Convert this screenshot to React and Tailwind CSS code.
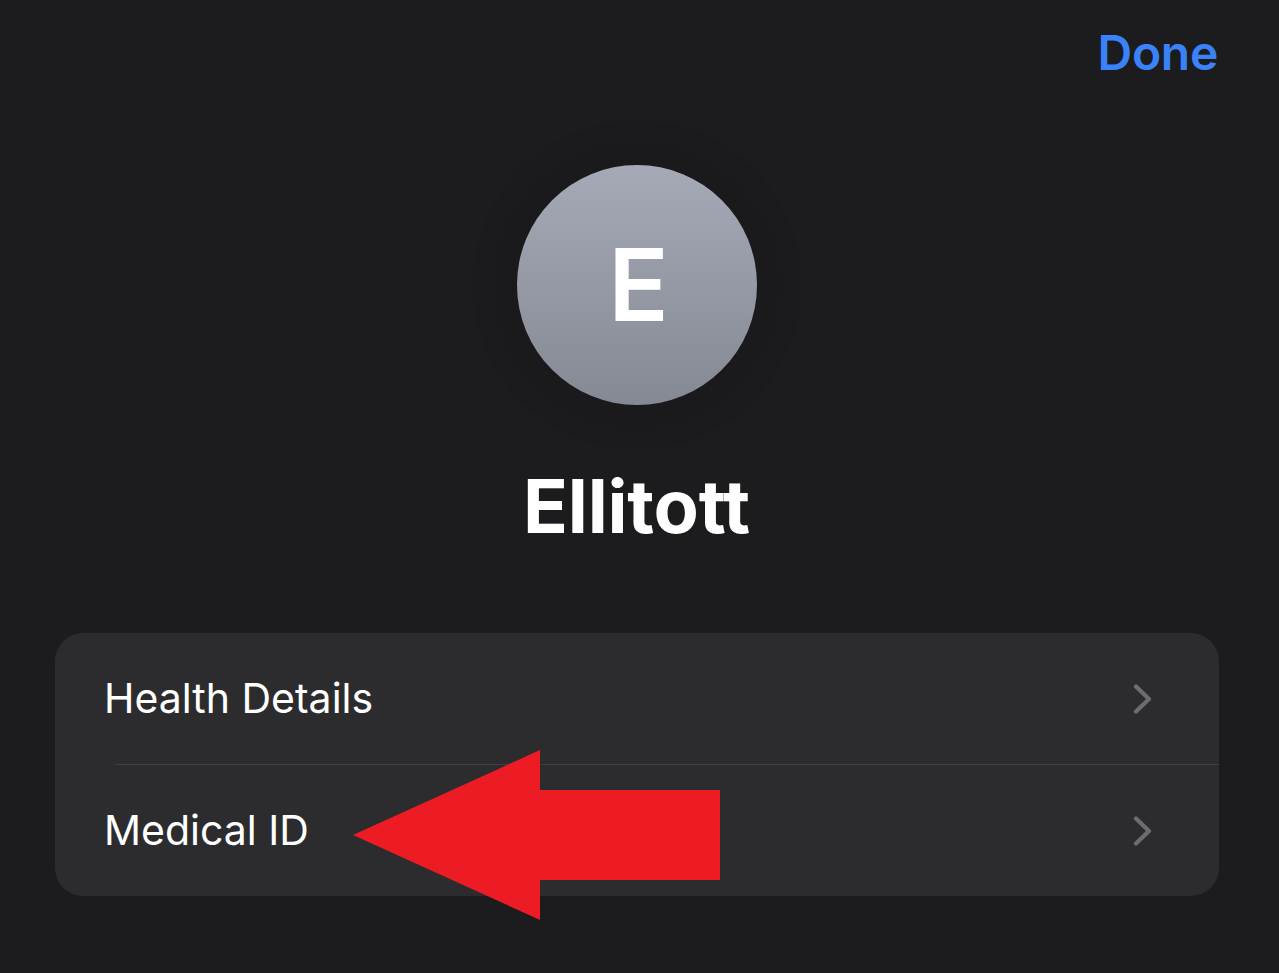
import React from 'react';

const font = { fontFamily: 'Inter, "Noto Sans", sans-serif' };

function Chevron() {
  return (
    <svg width="20" height="30" viewBox="0 0 20 30" fill="none" className="shrink-0">
      <path d="M3 2.5 L16 15 L3 27.5" stroke="#6c6c71" strokeWidth="4.2" strokeLinecap="round" strokeLinejoin="round" />
    </svg>
  );
}

function Row({ label, divider }) {
  return (
    <div className="relative">
      <div className="flex h-[131px] items-center justify-between pl-[49px] pr-[66px]">
        <span className="text-[41px] text-white">{label}</span>
        <Chevron />
      </div>
      {divider && <div className="ml-[60px] h-px bg-[#3e3e41]" />}
    </div>
  );
}

export default function App() {
  return (
    <div className="relative h-[973px] w-full overflow-hidden bg-[#1c1c1e]" style={font}>
      {/* Nav bar */}
      <div className="flex h-[108px] items-center justify-end pb-[2px] pr-[61px]">
        <button className="text-[48px] font-semibold tracking-[-0.3px] text-[#3a82f7]">Done</button>
      </div>

      {/* Avatar */}
      <div className="mt-[12px] flex justify-center pr-[6px]">
        <div className="flex h-[330px] w-[330px] items-center justify-center rounded-full bg-[radial-gradient(circle,#1a1a1c_55%,#1b1b1d_85%,#1c1c1e_100%)]">
          <div className="flex h-[240px] w-[240px] items-center justify-center rounded-full bg-gradient-to-b from-[#a6aab6] to-[#858994]">
            <span className="pl-[4px] text-[100px] font-semibold leading-none text-white">E</span>
          </div>
        </div>
      </div>

      {/* Name */}
      <div className="mt-[19px] flex justify-center pr-[6px]">
        <h1 className="text-[74px] font-bold leading-none tracking-[-0.2px] text-white">Ellitott</h1>
      </div>

      {/* List */}
      <div className="ml-[55px] mt-[90px] w-[1164px] overflow-hidden rounded-[28px] bg-[#2c2c2e]">
        <Row label="Health Details" divider />
        <Row label="Medical ID" />
      </div>

      {/* Annotation arrow */}
      <svg className="absolute left-0 top-0" width="1279" height="973" viewBox="0 0 1279 973">
        <polygon points="353,835 540,750 540,790 720,790 720,880 540,880 540,920" fill="#ed1c24" />
      </svg>
    </div>
  );
}
